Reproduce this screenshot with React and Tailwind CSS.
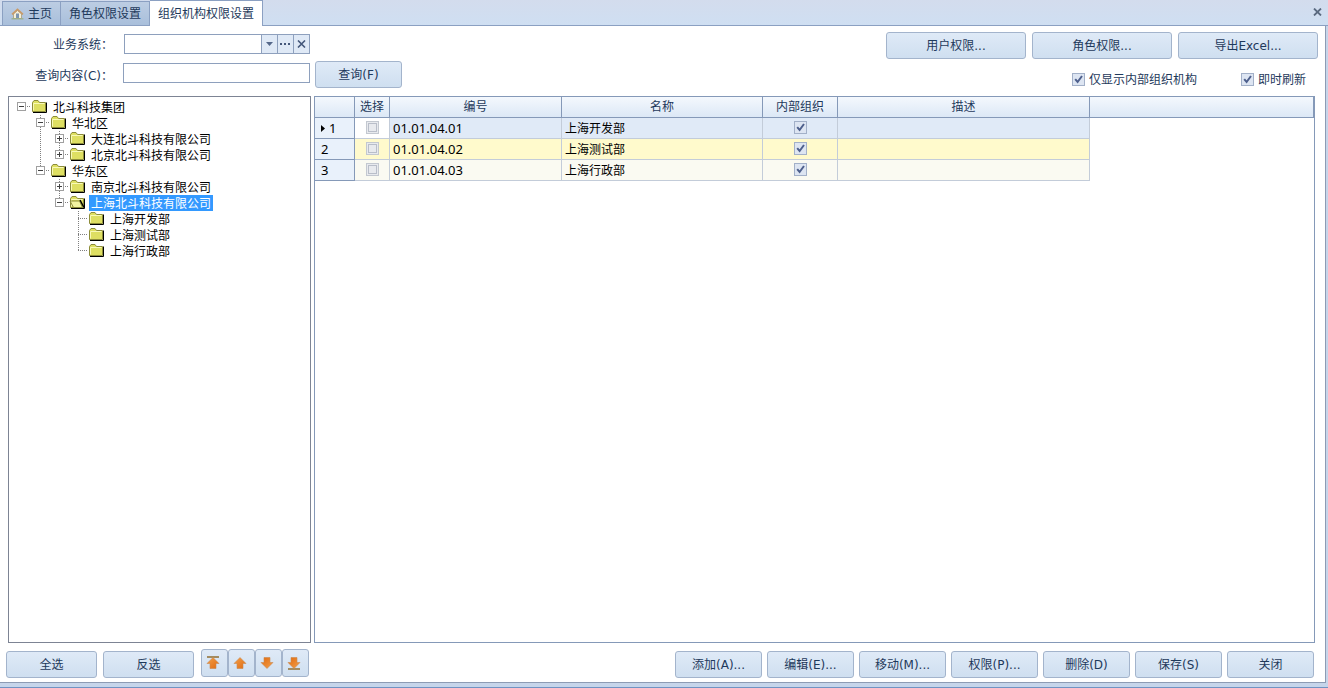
import { useState } from 'react';
import clsx from 'clsx';

const treeRows = [
  { id: 1, text: '北斗科技集团', cells: ['root-minus'] },
  { id: 2, text: '华北区', cells: ['blank', 'minus'] },
  { id: 3, text: '大连北斗科技有限公司', cells: ['blank', 'line', 'plus'] },
  { id: 4, text: '北京北斗科技有限公司', cells: ['blank', 'line', 'plus-last'] },
  { id: 5, text: '华东区', cells: ['blank', 'minus-last'] },
  { id: 6, text: '南京北斗科技有限公司', cells: ['blank', 'blank', 'plus'] },
  { id: 7, text: '上海北斗科技有限公司', cells: ['blank', 'blank', 'minus-last'] },
  { id: 8, text: '上海开发部', cells: ['blank', 'blank', 'blank', 'tee'] },
  { id: 9, text: '上海测试部', cells: ['blank', 'blank', 'blank', 'tee'] },
  { id: 10, text: '上海行政部', cells: ['blank', 'blank', 'blank', 'tee-last'] },
];

const gridRows = [
  { no: 1, code: '01.01.04.01', name: '上海开发部', bg: 'bg-[#e0eaf7]' },
  { no: 2, code: '01.01.04.02', name: '上海测试部', bg: 'bg-[#fffacc]' },
  { no: 3, code: '01.01.04.03', name: '上海行政部', bg: 'bg-[#fafaf2]' },
];

const footerActions = ['添加(A)...', '编辑(E)...', '移动(M)...', '权限(P)...', '删除(D)', '保存(S)', '关闭'];

function Btn({ className, children, ...rest }) {
  return (
    <button
      type="button"
      className={clsx(
        "flex shrink-0 items-center justify-center rounded-[3px] border border-[#a3b4cc] bg-linear-to-b from-[#dfeaf7] to-[#cfdff0] font-['DejaVu_Sans','Noto_Sans_CJK_SC',sans-serif] text-[#1e395b] hover:to-[#e6f0fb]",
        className
      )}
      {...rest}
    >
      {children}
    </button>
  );
}

function Check({ className, muted, ...rest }) {
  return (
    <span className={clsx('relative block size-[13px] shrink-0', className)}>
      <input
        type="checkbox"
        className={clsx(
          'peer block size-[13px] appearance-none border',
          muted ? 'border-[#c3c8d0] bg-[#e8eaee]' : 'border-[#a2b0c8] bg-[#dde5f2]'
        )}
        {...rest}
      />
      {muted && <span className="pointer-events-none absolute inset-[2px] border border-[#b9bec9]" />}
      <svg className="pointer-events-none absolute inset-0 hidden peer-checked:block" width="13" height="13" viewBox="0 0 13 13" fill="none">
        <path d="M3.2 6.2 L5.6 9 L10 3" stroke="#4d5f8c" strokeWidth="2" />
      </svg>
    </span>
  );
}

// One 19x16 slot of the tree's guide lines
function Guide({ kind }) {
  const last = kind.endsWith('last');
  const hasBox = kind.includes('plus') || kind.includes('minus');
  const plus = kind.startsWith('plus');
  return (
    <svg width="19" height="16" viewBox="0 0 19 16" className="shrink-0" shapeRendering="crispEdges" fill="none">
      {kind !== 'blank' && (
        <g stroke="#808080" strokeDasharray="1 1">
          {!kind.startsWith('root') && <path d={last ? 'M9.5 0V8' : 'M9.5 0V16'} />}
          {kind !== 'line' && <path d="M9 7.5H19" />}
        </g>
      )}
      {hasBox && (
        <>
          <rect x="5.5" y="3.5" width="8" height="8" fill="#fff" stroke="#a0a0a0" />
          <path d="M7 7.5H12" stroke="#404040" />
          {plus && <path d="M9.5 5V10" stroke="#404040" />}
        </>
      )}
    </svg>
  );
}

function Folder({ open }) {
  return (
    <svg width="19" height="16" viewBox="0 0 19 16" className="shrink-0">
      <path d="M2 13.5H15.5V3.5" stroke="#000" fill="none" />
      <path d="M1.5 12.5V3.5L3 1.5H7L8.5 3.5H14.5V12.5Z" fill="#dedf62" stroke="#8c8c3a" />
      <path d="M2.5 11.5V4.5H13.5" stroke="#f8f9b8" fill="none" />
      {open && (
        <>
          <path d="M1 6H10.5L13.5 12.5H4.5Z" fill="#f2f3a0" stroke="#8c8c3a" />
          <path d="M11 5L15 12.5" stroke="#000" strokeWidth="1.5" />
        </>
      )}
    </svg>
  );
}

function Arrow({ down, bar }) {
  return (
    <svg width="16" height="16" viewBox="0 0 16 16" className="mr-[3px]">
      <defs>
        <linearGradient id="arrowFill" x1="0" y1="0" x2="1" y2="1">
          <stop offset="0" stopColor="#f3a04a" />
          <stop offset="1" stopColor="#e06a10" />
        </linearGradient>
      </defs>
      <g transform={down ? 'rotate(180 8 8)' : undefined}>
        {bar && <rect x="2" y="1" width="12" height="2" fill="#a38c62" />}
        <path d="M8 2.5L14 8.5H11V13.5H5V8.5H2Z" fill="url(#arrowFill)" stroke="#c98a50" strokeWidth="0.6" />
      </g>
    </svg>
  );
}

function HomeIcon() {
  return (
    <svg width="13" height="12" viewBox="0 0 13 12">
      <path d="M2.5 6V10.5H10.5V6L6.5 2.5Z" fill="#f6efd8" stroke="#a89a78" strokeWidth="0.8" />
      <path d="M1 6.3L6.5 1.3L12 6.3" fill="none" stroke="#c99a68" strokeWidth="1.6" />
      <rect x="5" y="5.5" width="3" height="4.5" fill="#7d95b0" />
      <path d="M0.5 10.8H12.5" stroke="#9aaf86" strokeWidth="1.2" />
    </svg>
  );
}

export default function App() {
  const [system, setSystem] = useState('');
  const [query, setQuery] = useState('');
  const [selected, setSelected] = useState(7);

  const th = 'border-r border-b border-[#8599b8] bg-linear-to-b from-[#f4f8fd] to-[#dce8f6] p-0 text-center font-normal text-[#1e395b]';
  const td = 'border-r border-b border-[#c3ccd9] px-[3px] py-0';
  const addon = 'flex w-4 items-center justify-center border-l border-[#8ea0bd] bg-[#dfe9f6]';

  return (
    <div className="flex min-h-screen flex-col border-b border-[#6f93c2] bg-[#c6d5ea] pr-[2px] pb-1 font-['Noto_Sans','Noto_Sans_CJK_SC',sans-serif] text-[12px] leading-4 text-[#1e395b]">
      {/* Tabs */}
      <div className="-mr-[2px] flex h-[26px] items-end border-b border-[#8ba0c2] bg-linear-to-b from-[#d3dced] to-[#cfdff2] pl-[2px]">
        <button type="button" className="flex h-6 items-center gap-1 border border-b-0 border-[#8ba0c2] bg-linear-to-b from-[#bccde3] to-[#a9bfdb] pt-px pr-2 pl-2">
          <HomeIcon />
          <span>主页</span>
        </button>
        <button type="button" className="h-6 border-t border-r border-[#8ba0c2] bg-linear-to-b from-[#bccde3] to-[#a9bfdb] px-2 pt-px">角色权限设置</button>
        <button type="button" className="-mb-px h-[26px] border-t border-r border-[#8ba0c2] bg-white px-2 pt-px">组织机构权限设置</button>
        <button type="button" aria-label="关闭标签" className="mr-1 ml-auto flex h-[26px] w-[14px] items-center justify-center">
          <svg width="9" height="8" viewBox="0 0 9 8"><path d="M1 0.5L8 7.5M8 0.5L1 7.5" stroke="#5b6a80" strokeWidth="1.8" /></svg>
        </button>
      </div>

      <main className="flex flex-1 flex-col border-r border-b border-[#8d9bb3] bg-white pt-[6px] pb-1">
        {/* Search form and global actions */}
        <div className="flex justify-between pr-[7px] pl-2">
          <div className="flex flex-col gap-[5px]">
            <div className="flex h-6 items-center">
              <label htmlFor="system" className="w-[105px] pt-[2px] text-right">业务系统：</label>
              <div className="ml-[11px] flex h-5 w-[186px] border border-[#8ea0bd]">
                <input id="system" type="text" value={system} onChange={(e) => setSystem(e.target.value)} className="min-w-0 flex-1 bg-white px-1 outline-none" />
                <button type="button" aria-label="下拉" className={addon}>
                  <svg width="7" height="4" viewBox="0 0 7 4"><path d="M0 0H7L3.5 4Z" fill="#55688a" /></svg>
                </button>
                <button type="button" aria-label="浏览" className={addon}>
                  <svg width="11" height="2" viewBox="0 0 11 2" fill="#44577a"><rect width="2" height="2" /><rect x="4" width="2" height="2" /><rect x="8" width="2" height="2" /></svg>
                </button>
                <button type="button" aria-label="清除" onClick={() => setSystem('')} className={addon}>
                  <svg width="9" height="8" viewBox="0 0 9 8"><path d="M1 0.5L8 7.5M8 0.5L1 7.5" stroke="#44577a" strokeWidth="1.6" /></svg>
                </button>
              </div>
            </div>
            <div className="flex items-start">
              <label htmlFor="query" className="w-[105px] pt-[7px] text-right font-['DejaVu_Sans','Noto_Sans_CJK_SC',sans-serif]">查询内容(C)：</label>
              <input id="query" type="text" value={query} onChange={(e) => setQuery(e.target.value)} className="mt-[2px] ml-[10px] h-5 w-[187px] border border-[#8ea0bd] bg-white px-1 outline-none" />
              <Btn className="ml-[5px] h-[27px] w-[87px]">查询(F)</Btn>
            </div>
          </div>

          <div className="flex flex-col gap-3">
            <div className="flex gap-[6px]">
              <Btn className="h-[27px] w-[140px]">用户权限...</Btn>
              <Btn className="h-[27px] w-[140px]">角色权限...</Btn>
              <Btn className="h-[27px] w-[140px]">导出Excel...</Btn>
            </div>
            <div className="flex h-[17px] items-center justify-end gap-11 pr-3">
              <label className="flex items-center gap-1"><Check defaultChecked />仅显示内部组织机构</label>
              <label className="flex items-center gap-1"><Check defaultChecked />即时刷新</label>
            </div>
          </div>
        </div>

        <div className="mt-2 flex flex-1 gap-[3px] pr-[10px] pl-2">
          {/* Organization tree */}
          <ul role="tree" className="w-[303px] shrink-0 border border-[#7d8494] pt-[2px] pl-[3px] text-black">
            {treeRows.map((row) => (
              <li key={row.id} role="treeitem" aria-level={row.cells.length} aria-selected={selected === row.id} className="flex h-4">
                {row.cells.map((kind, i) => (
                  <Guide key={i} kind={kind} />
                ))}
                <Folder open={selected === row.id} />
                <button
                  type="button"
                  onClick={() => setSelected(row.id)}
                  className={clsx('ml-px h-4 px-[2px] pt-px leading-[15px] whitespace-nowrap', selected === row.id && 'bg-[#3399ff] text-white')}
                >
                  {row.text}
                </button>
              </li>
            ))}
          </ul>

          {/* Data grid */}
          <div className="min-w-0 flex-1 border border-[#8599b8]">
            <table className="w-full table-fixed border-separate border-spacing-0 text-black">
              <colgroup>
                <col className="w-[40px]" />
                <col className="w-[35px]" />
                <col className="w-[172px]" />
                <col className="w-[201px]" />
                <col className="w-[75px]" />
                <col className="w-[252px]" />
                <col />
              </colgroup>
              <thead>
                <tr className="h-[21px]">
                  <th className={th} />
                  <th className={th}>选择</th>
                  <th className={th}>编号</th>
                  <th className={th}>名称</th>
                  <th className={th}>内部组织</th>
                  <th className={th}>描述</th>
                  <th className={th} />
                </tr>
              </thead>
              <tbody>
                {gridRows.map((row, i) => (
                  <tr key={row.no} className="h-[21px]">
                    <td className="border-r border-b border-[#8599b8] bg-[#e9f1fb] p-0 pl-[6px] text-[13px]">
                      <span className="flex items-center gap-1">
                        {i === 0 && <svg width="4" height="7" viewBox="0 0 4 7"><path d="M0 0L4 3.5L0 7Z" fill="#000" /></svg>}
                        {row.no}
                      </span>
                    </td>
                    <td className={clsx(td, 'pb-[2px]', i === 0 ? 'bg-white' : row.bg)}>
                      <Check muted aria-label={`选择 ${row.name}`} className="mx-auto" />
                    </td>
                    <td className={clsx(td, row.bg, 'text-[13px]')}>{row.code}</td>
                    <td className={clsx(td, row.bg, 'pt-[2px]')}>{row.name}</td>
                    <td className={clsx(td, 'pb-[2px]', row.bg)}>
                      <Check defaultChecked aria-label={`内部组织 ${row.name}`} className="mx-auto" />
                    </td>
                    <td className={clsx(td, row.bg)} />
                    <td className="p-0" />
                  </tr>
                ))}
              </tbody>
            </table>
          </div>
        </div>

        {/* Footer */}
        <div className="mt-[6px] flex h-[29px] items-end justify-between pr-[11px] pl-[6px]">
          <div className="flex items-end gap-[6px]">
            <Btn className="h-[27px] w-[91px]">全选</Btn>
            <Btn className="h-[27px] w-[91px]">反选</Btn>
            <div className="flex h-[29px] items-start pl-px">
              <Btn aria-label="置顶" className="h-[28px] w-[27px]"><Arrow bar /></Btn>
              <Btn aria-label="上移" className="h-[28px] w-[27px]"><Arrow /></Btn>
              <Btn aria-label="下移" className="h-[28px] w-[27px]"><Arrow down /></Btn>
              <Btn aria-label="置底" className="h-[28px] w-[27px]"><Arrow down bar /></Btn>
            </div>
          </div>
          <div className="flex gap-[5px]">
            {footerActions.map((label) => (
              <Btn key={label} className="h-[27px] w-[87px]">{label}</Btn>
            ))}
          </div>
        </div>
      </main>
    </div>
  );
}
